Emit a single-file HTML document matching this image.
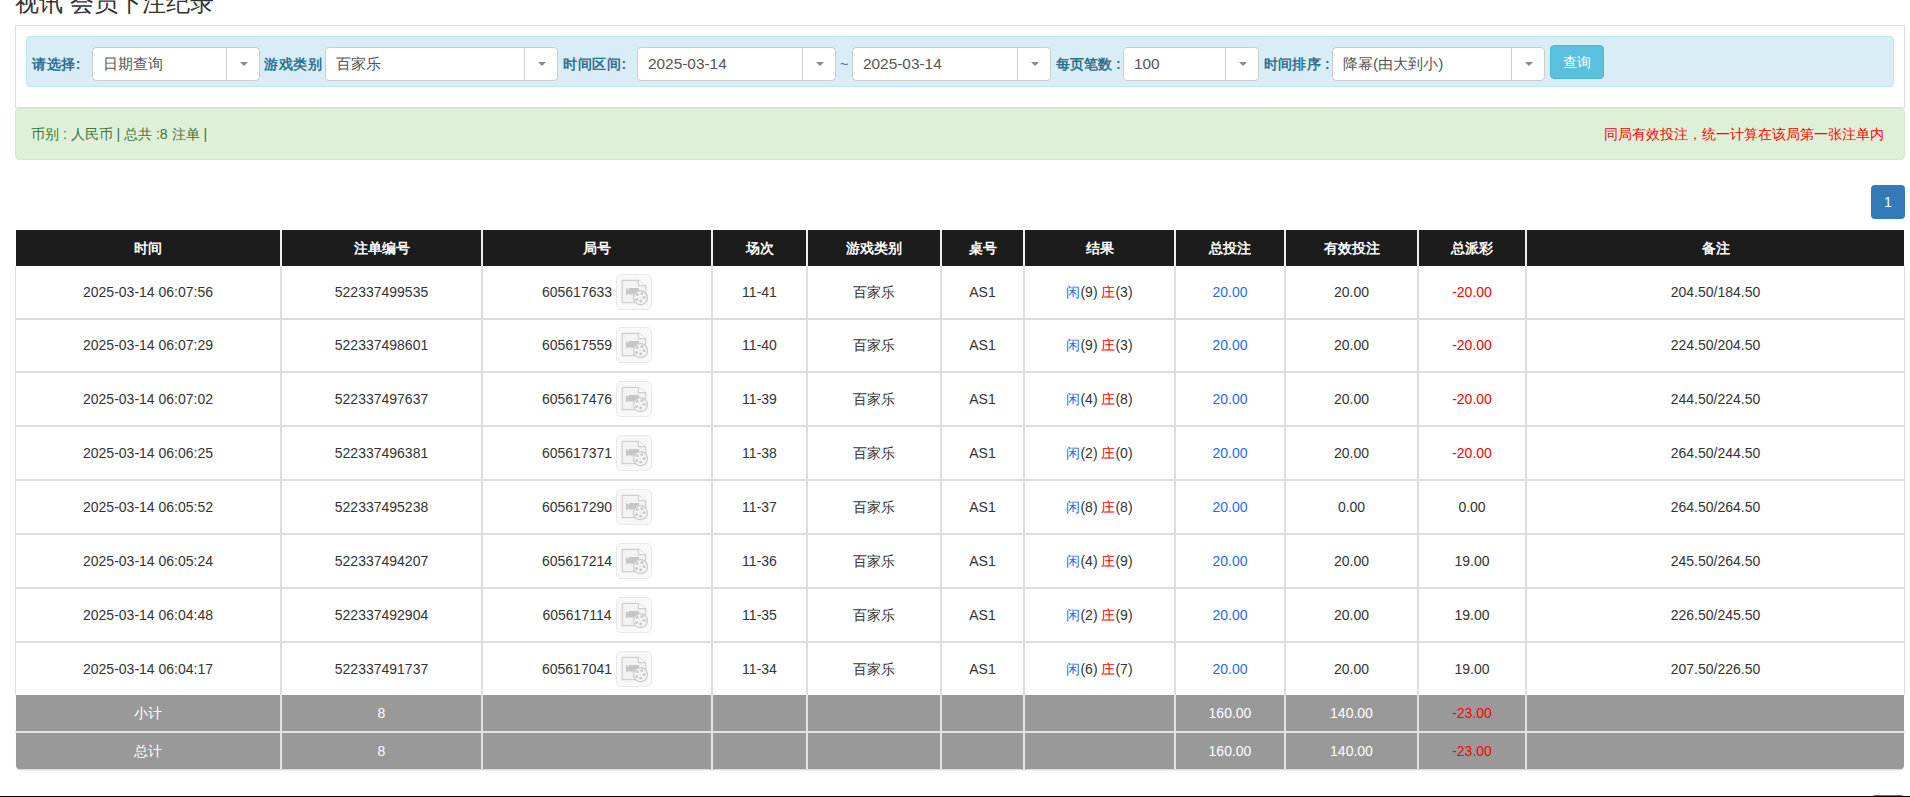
<!DOCTYPE html><html><head><meta charset="utf-8"><title>视讯 会员下注纪录</title><style>
*{box-sizing:border-box;margin:0;padding:0}
html,body{width:1910px;height:797px;overflow:hidden;background:#fff}
body{position:relative;font-family:"Liberation Sans",sans-serif;font-size:14px;color:#333}
.a{position:absolute}
.title{left:15px;top:-12px;font-size:24px;line-height:30px;color:#333;white-space:nowrap}
.panel{left:15px;top:25px;width:1890px;height:83px;border:1px solid #ddd}
.info{left:26px;top:36px;width:1868px;height:51px;background:#d9edf7;border:1px solid #bce8f1;border-radius:4px}
.lbl{color:#31708f;font-weight:bold;top:54px;line-height:20px;white-space:nowrap}
.sel{top:47px;height:34px;background:#fff;border:1px solid #ccc;border-radius:4px}
.sel .t{position:absolute;left:10px;top:5px;line-height:22px;font-size:15.4px;color:#555;white-space:nowrap}
.sel .d{position:absolute;top:0;bottom:0;border-left:1px solid #ccc}
.sel .c{position:absolute;top:14px;width:0;height:0;border-left:4px solid transparent;border-right:4px solid transparent;border-top:4px solid #888}
.btn{left:1550px;top:45px;width:54px;height:34px;background:#5bc0de;border:1px solid #46b8da;border-radius:4px;color:#fff;text-align:center;line-height:32px}
.ok{left:15px;top:108px;width:1890px;height:52px;background:#dff0d8;border:1px solid #d6e9c6;border-radius:4px}
.okt{left:31px;top:124px;line-height:20px;color:#3c763d;white-space:nowrap}
.red{left:1604px;top:124px;line-height:20px;color:#f00;white-space:nowrap}
.pg{left:1871px;top:185px;width:34px;height:34px;background:#337ab7;border-radius:4px;color:#fff;text-align:center;line-height:34px;font-size:14px}
.thead{left:16px;top:230px;width:1888px;height:36px;background:#1c1c1c}
.th{top:230px;height:36px;line-height:36px;text-align:center;color:#fff;font-weight:bold}
.vl{width:2px;background:#ddd}
.hl{height:2px;background:#ddd}
.td{height:20px;line-height:20px;text-align:center;white-space:nowrap}
.gray{left:16px;top:695px;width:1888px;height:74px;background:#999;border-radius:0 0 4px 4px;box-shadow:0 2px 2px -1px rgba(0,0,0,.2)}
.gt{color:#fff}
.blue{color:#1f6bf0}
.rd{color:#f00}
.icell{display:flex;align-items:center;justify-content:center;height:36px}
.ib{display:block;width:36px;height:36px;margin-left:4px}
.ib svg{display:block}
</style></head><body>
<div class="a title">视讯 会员下注纪录</div>
<div class="a panel"></div><div class="a info"></div>
<div class="a lbl" style="left:32px;letter-spacing:.6px">请选择:</div>
<div class="a sel" style="left:92px;width:168px"><span class="t">日期查询</span><span class="d" style="left:133px"></span><span class="c" style="left:147px"></span></div>
<div class="a lbl" style="left:264px;letter-spacing:.5px">游戏类别</div>
<div class="a sel" style="left:325px;width:233px"><span class="t">百家乐</span><span class="d" style="left:198px"></span><span class="c" style="left:212px"></span></div>
<div class="a lbl" style="left:563px;letter-spacing:.6px">时间区间:</div>
<div class="a sel" style="left:637px;width:199px"><span class="t">2025-03-14</span><span class="d" style="left:164px"></span><span class="c" style="left:178px"></span></div>
<div class="a lbl" style="left:840px;font-weight:normal">~</div>
<div class="a sel" style="left:852px;width:199px"><span class="t">2025-03-14</span><span class="d" style="left:164px"></span><span class="c" style="left:178px"></span></div>
<div class="a lbl" style="left:1056px">每页笔数 :</div>
<div class="a sel" style="left:1123px;width:136px"><span class="t">100</span><span class="d" style="left:101px"></span><span class="c" style="left:115px"></span></div>
<div class="a lbl" style="left:1264px;letter-spacing:.2px">时间排序 :</div>
<div class="a sel" style="left:1332px;width:213px"><span class="t">降幂(由大到小)</span><span class="d" style="left:178px"></span><span class="c" style="left:192px"></span></div>
<div class="a btn">查询</div>
<div class="a ok"></div><div class="a okt">币别 : 人民币 | 总共 :8 注单 |</div>
<div class="a red">同局有效投注，统一计算在该局第一张注单内</div>
<div class="a pg">1</div>
<div class="a thead"></div>
<div class="a th" style="left:15px;width:266px">时间</div>
<div class="a th" style="left:281px;width:201px">注单编号</div>
<div class="a th" style="left:482px;width:230px">局号</div>
<div class="a th" style="left:712px;width:95px">场次</div>
<div class="a th" style="left:807px;width:134px">游戏类别</div>
<div class="a th" style="left:941px;width:83px">桌号</div>
<div class="a th" style="left:1024px;width:151px">结果</div>
<div class="a th" style="left:1175px;width:110px">总投注</div>
<div class="a th" style="left:1285px;width:133px">有效投注</div>
<div class="a th" style="left:1418px;width:108px">总派彩</div>
<div class="a th" style="left:1526px;width:379px">备注</div>
<div class="a" style="left:15px;top:266px;width:1px;height:429px;background:#ddd"></div>
<div class="a" style="left:1904px;top:266px;width:1px;height:429px;background:#ddd"></div>
<div class="a vl" style="left:280px;top:230px;height:36px;background:#eee"></div>
<div class="a vl" style="left:280px;top:266px;height:429px"></div>
<div class="a vl" style="left:481px;top:230px;height:36px;background:#eee"></div>
<div class="a vl" style="left:481px;top:266px;height:429px"></div>
<div class="a vl" style="left:711px;top:230px;height:36px;background:#eee"></div>
<div class="a vl" style="left:711px;top:266px;height:429px"></div>
<div class="a vl" style="left:806px;top:230px;height:36px;background:#eee"></div>
<div class="a vl" style="left:806px;top:266px;height:429px"></div>
<div class="a vl" style="left:940px;top:230px;height:36px;background:#eee"></div>
<div class="a vl" style="left:940px;top:266px;height:429px"></div>
<div class="a vl" style="left:1023px;top:230px;height:36px;background:#eee"></div>
<div class="a vl" style="left:1023px;top:266px;height:429px"></div>
<div class="a vl" style="left:1174px;top:230px;height:36px;background:#eee"></div>
<div class="a vl" style="left:1174px;top:266px;height:429px"></div>
<div class="a vl" style="left:1284px;top:230px;height:36px;background:#eee"></div>
<div class="a vl" style="left:1284px;top:266px;height:429px"></div>
<div class="a vl" style="left:1417px;top:230px;height:36px;background:#eee"></div>
<div class="a vl" style="left:1417px;top:266px;height:429px"></div>
<div class="a vl" style="left:1525px;top:230px;height:36px;background:#eee"></div>
<div class="a vl" style="left:1525px;top:266px;height:429px"></div>
<div class="a hl" style="left:15px;top:318px;width:1890px"></div>
<div class="a hl" style="left:15px;top:371px;width:1890px"></div>
<div class="a hl" style="left:15px;top:425px;width:1890px"></div>
<div class="a hl" style="left:15px;top:479px;width:1890px"></div>
<div class="a hl" style="left:15px;top:533px;width:1890px"></div>
<div class="a hl" style="left:15px;top:587px;width:1890px"></div>
<div class="a hl" style="left:15px;top:641px;width:1890px"></div>
<div class="a gray"></div>
<div class="a vl" style="left:280px;top:695px;height:74px;background:#e3e3e3"></div>
<div class="a vl" style="left:481px;top:695px;height:74px;background:#e3e3e3"></div>
<div class="a vl" style="left:711px;top:695px;height:74px;background:#e3e3e3"></div>
<div class="a vl" style="left:806px;top:695px;height:74px;background:#e3e3e3"></div>
<div class="a vl" style="left:940px;top:695px;height:74px;background:#e3e3e3"></div>
<div class="a vl" style="left:1023px;top:695px;height:74px;background:#e3e3e3"></div>
<div class="a vl" style="left:1174px;top:695px;height:74px;background:#e3e3e3"></div>
<div class="a vl" style="left:1284px;top:695px;height:74px;background:#e3e3e3"></div>
<div class="a vl" style="left:1417px;top:695px;height:74px;background:#e3e3e3"></div>
<div class="a vl" style="left:1525px;top:695px;height:74px;background:#e3e3e3"></div>
<div class="a hl" style="left:15px;top:731px;width:1890px;background:#e3e3e3"></div>
<div class="a td" style="left:15px;width:266px;top:282px">2025-03-14 06:07:56</div>
<div class="a td" style="left:281px;width:201px;top:282px">522337499535</div>
<div class="a icell" style="left:482px;width:230px;top:274px"><span>605617633</span><span class="ib"><svg width="36" height="36" viewBox="0 0 36 36"><rect x="0.5" y="0.5" width="35" height="35" rx="4.5" fill="#f8f8f8" stroke="#e9e9e9"/><path d="M6.3 6.3H22.5L29.6 11.7V28.6H6.3Z" fill="#f3f3f3" stroke="#cfcfcf" stroke-width="1.3"/><path d="M22.5 6.3V11.7H29.6" fill="#fff" stroke="#cfcfcf" stroke-width="1.3"/><path d="M10 14L13 16V14H23V20.5H13V19.5L10 21.5Z" fill="#c6c6c6"/><circle cx="24.4" cy="23.7" r="7" fill="#f5f5f5" stroke="#cacaca" stroke-width="1.2"/><g fill="#c8c8c8"><circle cx="21.3" cy="20.6" r="1.5"/><circle cx="25.9" cy="19.6" r="1.5"/><circle cx="28.1" cy="23.6" r="1.5"/><circle cx="20.6" cy="25.4" r="1.5"/><circle cx="24.6" cy="27.1" r="1.5"/><circle cx="24" cy="23.4" r="0.5"/></g></svg></span></div>
<div class="a td" style="left:712px;width:95px;top:282px">11-41</div>
<div class="a td" style="left:807px;width:134px;top:282px">百家乐</div>
<div class="a td" style="left:941px;width:83px;top:282px">AS1</div>
<div class="a td" style="left:1024px;width:151px;top:282px"><span class="blue">闲</span>(9) <span class="rd">庄</span>(3)</div>
<div class="a td" style="left:1175px;width:110px;top:282px"><span class="blue">20.00</span></div>
<div class="a td" style="left:1285px;width:133px;top:282px">20.00</div>
<div class="a td" style="left:1418px;width:108px;top:282px"><span class="rd">-20.00</span></div>
<div class="a td" style="left:1526px;width:379px;top:282px">204.50/184.50</div>
<div class="a td" style="left:15px;width:266px;top:335px">2025-03-14 06:07:29</div>
<div class="a td" style="left:281px;width:201px;top:335px">522337498601</div>
<div class="a icell" style="left:482px;width:230px;top:327px"><span>605617559</span><span class="ib"><svg width="36" height="36" viewBox="0 0 36 36"><rect x="0.5" y="0.5" width="35" height="35" rx="4.5" fill="#f8f8f8" stroke="#e9e9e9"/><path d="M6.3 6.3H22.5L29.6 11.7V28.6H6.3Z" fill="#f3f3f3" stroke="#cfcfcf" stroke-width="1.3"/><path d="M22.5 6.3V11.7H29.6" fill="#fff" stroke="#cfcfcf" stroke-width="1.3"/><path d="M10 14L13 16V14H23V20.5H13V19.5L10 21.5Z" fill="#c6c6c6"/><circle cx="24.4" cy="23.7" r="7" fill="#f5f5f5" stroke="#cacaca" stroke-width="1.2"/><g fill="#c8c8c8"><circle cx="21.3" cy="20.6" r="1.5"/><circle cx="25.9" cy="19.6" r="1.5"/><circle cx="28.1" cy="23.6" r="1.5"/><circle cx="20.6" cy="25.4" r="1.5"/><circle cx="24.6" cy="27.1" r="1.5"/><circle cx="24" cy="23.4" r="0.5"/></g></svg></span></div>
<div class="a td" style="left:712px;width:95px;top:335px">11-40</div>
<div class="a td" style="left:807px;width:134px;top:335px">百家乐</div>
<div class="a td" style="left:941px;width:83px;top:335px">AS1</div>
<div class="a td" style="left:1024px;width:151px;top:335px"><span class="blue">闲</span>(9) <span class="rd">庄</span>(3)</div>
<div class="a td" style="left:1175px;width:110px;top:335px"><span class="blue">20.00</span></div>
<div class="a td" style="left:1285px;width:133px;top:335px">20.00</div>
<div class="a td" style="left:1418px;width:108px;top:335px"><span class="rd">-20.00</span></div>
<div class="a td" style="left:1526px;width:379px;top:335px">224.50/204.50</div>
<div class="a td" style="left:15px;width:266px;top:389px">2025-03-14 06:07:02</div>
<div class="a td" style="left:281px;width:201px;top:389px">522337497637</div>
<div class="a icell" style="left:482px;width:230px;top:381px"><span>605617476</span><span class="ib"><svg width="36" height="36" viewBox="0 0 36 36"><rect x="0.5" y="0.5" width="35" height="35" rx="4.5" fill="#f8f8f8" stroke="#e9e9e9"/><path d="M6.3 6.3H22.5L29.6 11.7V28.6H6.3Z" fill="#f3f3f3" stroke="#cfcfcf" stroke-width="1.3"/><path d="M22.5 6.3V11.7H29.6" fill="#fff" stroke="#cfcfcf" stroke-width="1.3"/><path d="M10 14L13 16V14H23V20.5H13V19.5L10 21.5Z" fill="#c6c6c6"/><circle cx="24.4" cy="23.7" r="7" fill="#f5f5f5" stroke="#cacaca" stroke-width="1.2"/><g fill="#c8c8c8"><circle cx="21.3" cy="20.6" r="1.5"/><circle cx="25.9" cy="19.6" r="1.5"/><circle cx="28.1" cy="23.6" r="1.5"/><circle cx="20.6" cy="25.4" r="1.5"/><circle cx="24.6" cy="27.1" r="1.5"/><circle cx="24" cy="23.4" r="0.5"/></g></svg></span></div>
<div class="a td" style="left:712px;width:95px;top:389px">11-39</div>
<div class="a td" style="left:807px;width:134px;top:389px">百家乐</div>
<div class="a td" style="left:941px;width:83px;top:389px">AS1</div>
<div class="a td" style="left:1024px;width:151px;top:389px"><span class="blue">闲</span>(4) <span class="rd">庄</span>(8)</div>
<div class="a td" style="left:1175px;width:110px;top:389px"><span class="blue">20.00</span></div>
<div class="a td" style="left:1285px;width:133px;top:389px">20.00</div>
<div class="a td" style="left:1418px;width:108px;top:389px"><span class="rd">-20.00</span></div>
<div class="a td" style="left:1526px;width:379px;top:389px">244.50/224.50</div>
<div class="a td" style="left:15px;width:266px;top:443px">2025-03-14 06:06:25</div>
<div class="a td" style="left:281px;width:201px;top:443px">522337496381</div>
<div class="a icell" style="left:482px;width:230px;top:435px"><span>605617371</span><span class="ib"><svg width="36" height="36" viewBox="0 0 36 36"><rect x="0.5" y="0.5" width="35" height="35" rx="4.5" fill="#f8f8f8" stroke="#e9e9e9"/><path d="M6.3 6.3H22.5L29.6 11.7V28.6H6.3Z" fill="#f3f3f3" stroke="#cfcfcf" stroke-width="1.3"/><path d="M22.5 6.3V11.7H29.6" fill="#fff" stroke="#cfcfcf" stroke-width="1.3"/><path d="M10 14L13 16V14H23V20.5H13V19.5L10 21.5Z" fill="#c6c6c6"/><circle cx="24.4" cy="23.7" r="7" fill="#f5f5f5" stroke="#cacaca" stroke-width="1.2"/><g fill="#c8c8c8"><circle cx="21.3" cy="20.6" r="1.5"/><circle cx="25.9" cy="19.6" r="1.5"/><circle cx="28.1" cy="23.6" r="1.5"/><circle cx="20.6" cy="25.4" r="1.5"/><circle cx="24.6" cy="27.1" r="1.5"/><circle cx="24" cy="23.4" r="0.5"/></g></svg></span></div>
<div class="a td" style="left:712px;width:95px;top:443px">11-38</div>
<div class="a td" style="left:807px;width:134px;top:443px">百家乐</div>
<div class="a td" style="left:941px;width:83px;top:443px">AS1</div>
<div class="a td" style="left:1024px;width:151px;top:443px"><span class="blue">闲</span>(2) <span class="rd">庄</span>(0)</div>
<div class="a td" style="left:1175px;width:110px;top:443px"><span class="blue">20.00</span></div>
<div class="a td" style="left:1285px;width:133px;top:443px">20.00</div>
<div class="a td" style="left:1418px;width:108px;top:443px"><span class="rd">-20.00</span></div>
<div class="a td" style="left:1526px;width:379px;top:443px">264.50/244.50</div>
<div class="a td" style="left:15px;width:266px;top:497px">2025-03-14 06:05:52</div>
<div class="a td" style="left:281px;width:201px;top:497px">522337495238</div>
<div class="a icell" style="left:482px;width:230px;top:489px"><span>605617290</span><span class="ib"><svg width="36" height="36" viewBox="0 0 36 36"><rect x="0.5" y="0.5" width="35" height="35" rx="4.5" fill="#f8f8f8" stroke="#e9e9e9"/><path d="M6.3 6.3H22.5L29.6 11.7V28.6H6.3Z" fill="#f3f3f3" stroke="#cfcfcf" stroke-width="1.3"/><path d="M22.5 6.3V11.7H29.6" fill="#fff" stroke="#cfcfcf" stroke-width="1.3"/><path d="M10 14L13 16V14H23V20.5H13V19.5L10 21.5Z" fill="#c6c6c6"/><circle cx="24.4" cy="23.7" r="7" fill="#f5f5f5" stroke="#cacaca" stroke-width="1.2"/><g fill="#c8c8c8"><circle cx="21.3" cy="20.6" r="1.5"/><circle cx="25.9" cy="19.6" r="1.5"/><circle cx="28.1" cy="23.6" r="1.5"/><circle cx="20.6" cy="25.4" r="1.5"/><circle cx="24.6" cy="27.1" r="1.5"/><circle cx="24" cy="23.4" r="0.5"/></g></svg></span></div>
<div class="a td" style="left:712px;width:95px;top:497px">11-37</div>
<div class="a td" style="left:807px;width:134px;top:497px">百家乐</div>
<div class="a td" style="left:941px;width:83px;top:497px">AS1</div>
<div class="a td" style="left:1024px;width:151px;top:497px"><span class="blue">闲</span>(8) <span class="rd">庄</span>(8)</div>
<div class="a td" style="left:1175px;width:110px;top:497px"><span class="blue">20.00</span></div>
<div class="a td" style="left:1285px;width:133px;top:497px">0.00</div>
<div class="a td" style="left:1418px;width:108px;top:497px">0.00</div>
<div class="a td" style="left:1526px;width:379px;top:497px">264.50/264.50</div>
<div class="a td" style="left:15px;width:266px;top:551px">2025-03-14 06:05:24</div>
<div class="a td" style="left:281px;width:201px;top:551px">522337494207</div>
<div class="a icell" style="left:482px;width:230px;top:543px"><span>605617214</span><span class="ib"><svg width="36" height="36" viewBox="0 0 36 36"><rect x="0.5" y="0.5" width="35" height="35" rx="4.5" fill="#f8f8f8" stroke="#e9e9e9"/><path d="M6.3 6.3H22.5L29.6 11.7V28.6H6.3Z" fill="#f3f3f3" stroke="#cfcfcf" stroke-width="1.3"/><path d="M22.5 6.3V11.7H29.6" fill="#fff" stroke="#cfcfcf" stroke-width="1.3"/><path d="M10 14L13 16V14H23V20.5H13V19.5L10 21.5Z" fill="#c6c6c6"/><circle cx="24.4" cy="23.7" r="7" fill="#f5f5f5" stroke="#cacaca" stroke-width="1.2"/><g fill="#c8c8c8"><circle cx="21.3" cy="20.6" r="1.5"/><circle cx="25.9" cy="19.6" r="1.5"/><circle cx="28.1" cy="23.6" r="1.5"/><circle cx="20.6" cy="25.4" r="1.5"/><circle cx="24.6" cy="27.1" r="1.5"/><circle cx="24" cy="23.4" r="0.5"/></g></svg></span></div>
<div class="a td" style="left:712px;width:95px;top:551px">11-36</div>
<div class="a td" style="left:807px;width:134px;top:551px">百家乐</div>
<div class="a td" style="left:941px;width:83px;top:551px">AS1</div>
<div class="a td" style="left:1024px;width:151px;top:551px"><span class="blue">闲</span>(4) <span class="rd">庄</span>(9)</div>
<div class="a td" style="left:1175px;width:110px;top:551px"><span class="blue">20.00</span></div>
<div class="a td" style="left:1285px;width:133px;top:551px">20.00</div>
<div class="a td" style="left:1418px;width:108px;top:551px">19.00</div>
<div class="a td" style="left:1526px;width:379px;top:551px">245.50/264.50</div>
<div class="a td" style="left:15px;width:266px;top:605px">2025-03-14 06:04:48</div>
<div class="a td" style="left:281px;width:201px;top:605px">522337492904</div>
<div class="a icell" style="left:482px;width:230px;top:597px"><span>605617114</span><span class="ib"><svg width="36" height="36" viewBox="0 0 36 36"><rect x="0.5" y="0.5" width="35" height="35" rx="4.5" fill="#f8f8f8" stroke="#e9e9e9"/><path d="M6.3 6.3H22.5L29.6 11.7V28.6H6.3Z" fill="#f3f3f3" stroke="#cfcfcf" stroke-width="1.3"/><path d="M22.5 6.3V11.7H29.6" fill="#fff" stroke="#cfcfcf" stroke-width="1.3"/><path d="M10 14L13 16V14H23V20.5H13V19.5L10 21.5Z" fill="#c6c6c6"/><circle cx="24.4" cy="23.7" r="7" fill="#f5f5f5" stroke="#cacaca" stroke-width="1.2"/><g fill="#c8c8c8"><circle cx="21.3" cy="20.6" r="1.5"/><circle cx="25.9" cy="19.6" r="1.5"/><circle cx="28.1" cy="23.6" r="1.5"/><circle cx="20.6" cy="25.4" r="1.5"/><circle cx="24.6" cy="27.1" r="1.5"/><circle cx="24" cy="23.4" r="0.5"/></g></svg></span></div>
<div class="a td" style="left:712px;width:95px;top:605px">11-35</div>
<div class="a td" style="left:807px;width:134px;top:605px">百家乐</div>
<div class="a td" style="left:941px;width:83px;top:605px">AS1</div>
<div class="a td" style="left:1024px;width:151px;top:605px"><span class="blue">闲</span>(2) <span class="rd">庄</span>(9)</div>
<div class="a td" style="left:1175px;width:110px;top:605px"><span class="blue">20.00</span></div>
<div class="a td" style="left:1285px;width:133px;top:605px">20.00</div>
<div class="a td" style="left:1418px;width:108px;top:605px">19.00</div>
<div class="a td" style="left:1526px;width:379px;top:605px">226.50/245.50</div>
<div class="a td" style="left:15px;width:266px;top:659px">2025-03-14 06:04:17</div>
<div class="a td" style="left:281px;width:201px;top:659px">522337491737</div>
<div class="a icell" style="left:482px;width:230px;top:651px"><span>605617041</span><span class="ib"><svg width="36" height="36" viewBox="0 0 36 36"><rect x="0.5" y="0.5" width="35" height="35" rx="4.5" fill="#f8f8f8" stroke="#e9e9e9"/><path d="M6.3 6.3H22.5L29.6 11.7V28.6H6.3Z" fill="#f3f3f3" stroke="#cfcfcf" stroke-width="1.3"/><path d="M22.5 6.3V11.7H29.6" fill="#fff" stroke="#cfcfcf" stroke-width="1.3"/><path d="M10 14L13 16V14H23V20.5H13V19.5L10 21.5Z" fill="#c6c6c6"/><circle cx="24.4" cy="23.7" r="7" fill="#f5f5f5" stroke="#cacaca" stroke-width="1.2"/><g fill="#c8c8c8"><circle cx="21.3" cy="20.6" r="1.5"/><circle cx="25.9" cy="19.6" r="1.5"/><circle cx="28.1" cy="23.6" r="1.5"/><circle cx="20.6" cy="25.4" r="1.5"/><circle cx="24.6" cy="27.1" r="1.5"/><circle cx="24" cy="23.4" r="0.5"/></g></svg></span></div>
<div class="a td" style="left:712px;width:95px;top:659px">11-34</div>
<div class="a td" style="left:807px;width:134px;top:659px">百家乐</div>
<div class="a td" style="left:941px;width:83px;top:659px">AS1</div>
<div class="a td" style="left:1024px;width:151px;top:659px"><span class="blue">闲</span>(6) <span class="rd">庄</span>(7)</div>
<div class="a td" style="left:1175px;width:110px;top:659px"><span class="blue">20.00</span></div>
<div class="a td" style="left:1285px;width:133px;top:659px">20.00</div>
<div class="a td" style="left:1418px;width:108px;top:659px">19.00</div>
<div class="a td" style="left:1526px;width:379px;top:659px">207.50/226.50</div>
<div class="a td gt" style="left:15px;width:266px;top:703px">小计</div>
<div class="a td gt" style="left:281px;width:201px;top:703px">8</div>
<div class="a td gt" style="left:1175px;width:110px;top:703px">160.00</div>
<div class="a td gt" style="left:1285px;width:133px;top:703px">140.00</div>
<div class="a td gt" style="left:1418px;width:108px;top:703px"><span class="rd">-23.00</span></div>
<div class="a td gt" style="left:15px;width:266px;top:741px">总计</div>
<div class="a td gt" style="left:281px;width:201px;top:741px">8</div>
<div class="a td gt" style="left:1175px;width:110px;top:741px">160.00</div>
<div class="a td gt" style="left:1285px;width:133px;top:741px">140.00</div>
<div class="a td gt" style="left:1418px;width:108px;top:741px"><span class="rd">-23.00</span></div>
<div class="a" style="left:1872px;top:795px;width:32px;height:4px;background:#337ab7;border-radius:3px 3px 0 0"></div>
<div class="a" style="left:0;top:796px;width:1910px;height:1px;background:#000"></div>
</body></html>
